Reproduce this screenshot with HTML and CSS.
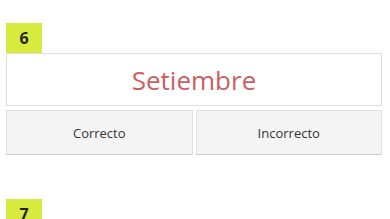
FILE: index.html
```html
<!DOCTYPE html>
<html lang="es">
<head>
<meta charset="UTF-8">
<meta name="viewport" content="width=device-width, initial-scale=1.0">
<title>Meses</title>
<link rel="stylesheet" href="styles.css">
</head>
<body>

<div class="question">
  <div class="number">6</div>
  <div class="word">Setiembre</div>
  <div class="answers">
    <button class="answer">Correcto</button>
    <button class="answer">Incorrecto</button>
  </div>
</div>

<div class="question">
  <div class="number">7</div>
</div>

</body>
</html>
```

FILE: styles.css
```css
body {
  font-family: "Open Sans", Arial, sans-serif;
  color: #333;
  background: #fff;
  margin: 0;
  padding: 23px 8px 0 6px;
}

.question {
  margin-bottom: 44px;
}

.number {
  display: inline-flex;
  align-items: center;
  justify-content: center;
  width: 36px;
  height: 30px;
  background-color: #d7eb3f;
  font-weight: bold;
  font-size: 16px;
  color: #222;
}

.word {
  height: 51px;
  border: 1px solid #ddd;
  display: flex;
  align-items: center;
  justify-content: center;
  font-size: 26px;
  color: #c9605f;
}

.answers {
  display: grid;
  grid-template-columns: 1fr 1fr;
  gap: 3px;
  margin-top: 4px;
}

.answer {
  height: 45px;
  background-color: #f4f4f4;
  border: 1px solid #e0e0e0;
  border-bottom-color: #ccc;
  font-family: "Open Sans", Arial, sans-serif;
  font-size: 13px;
  color: #333;
  cursor: pointer;
}
```
